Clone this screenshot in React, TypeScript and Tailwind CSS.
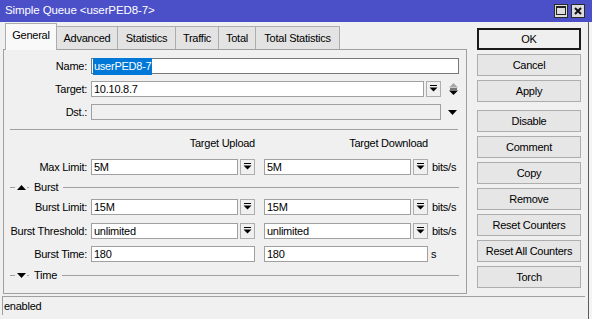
import React from "react";

const FONT = { fontFamily: '"Liberation Sans", Arial, sans-serif' };

const TABS = [
  { label: "General", w: "w-[52px]", active: true },
  { label: "Advanced", w: "w-[61px]" },
  { label: "Statistics", w: "w-[58px]" },
  { label: "Traffic", w: "w-[43px]" },
  { label: "Total", w: "w-[37px]" },
  { label: "Total Statistics", w: "w-[84px]" },
];

const BUTTONS = [
  "OK",
  "Cancel",
  "Apply",
  "Disable",
  "Comment",
  "Copy",
  "Remove",
  "Reset Counters",
  "Reset All Counters",
  "Torch",
];

function DropBtn() {
  return (
    <div className="w-[15px] h-[16px] ml-[2px] border border-[#adadad] bg-[#f0f0f0] flex items-center justify-center shrink-0">
      <svg width="9" height="8" viewBox="0 0 9 8">
        <rect x="1" y="0" width="7" height="1" fill="#000" />
        <polygon points="0.5,2.5 8.5,2.5 4.5,6.5" fill="#000" />
      </svg>
    </div>
  );
}

function Label({ text }: { text: string }) {
  return <div className="w-[87px] pr-[4px] text-right whitespace-nowrap shrink-0">{text}</div>;
}

function Input({ w, value, disabled }: { w: string; value?: string; disabled?: boolean }) {
  return (
    <div
      className={`${w} h-[16px] border border-[#a0a0a0] ${disabled ? "bg-[#f0f0f0]" : "bg-white"} pl-[2px] flex items-center whitespace-nowrap overflow-hidden shrink-0`}
    >
      {value}
    </div>
  );
}

function GroupLine({ label, open }: { label: string; open: boolean }) {
  return (
    <div className="flex items-center h-[12px]">
      <div className="ml-[6px] w-[5px] h-px bg-[#a0a0a0]" />
      <svg width="9" height="5" viewBox="0 0 9 5" className="ml-[2px]">
        {open ? (
          <polygon points="0,0 9,0 4.5,5" fill="#000" />
        ) : (
          <polygon points="0,5 9,5 4.5,0" fill="#000" />
        )}
      </svg>
      <div className="ml-[1px] w-[2px] h-px bg-[#a0a0a0]" />
      <span className="ml-[5px]">{label}</span>
      <div className="ml-[5px] flex-1 h-px bg-[#a0a0a0] mr-[7px]" />
    </div>
  );
}

export default function App() {
  return (
    <div
      className="w-[592px] h-[319px] bg-[#f0f0f0] text-[11px] tracking-[-0.25px] text-black flex flex-col overflow-hidden"
      style={FONT}
    >
      {/* title bar */}
      <div className="h-[22px] bg-[#4c50c8] flex items-center pl-[5px] pr-[7px] text-white text-[11.5px] tracking-[-0.1px]">
        <span className="flex-1">Simple Queue &lt;userPED8-7&gt;</span>
        <div className="w-[14px] h-[14px] bg-[#dcdcdc] border border-[#2a2a2a] flex items-center justify-center mb-[1px]">
          <div className="w-[10px] h-[9px] border border-[#222] border-t-2" />
        </div>
        <div className="w-[14px] h-[14px] ml-[3px] bg-[#dcdcdc] border border-[#2a2a2a] flex items-center justify-center mb-[1px]">
          <svg width="8" height="8" viewBox="0 0 8 8">
            <path d="M1 1 L7 7 M7 1 L1 7" stroke="#111" strokeWidth="2" />
          </svg>
        </div>
      </div>

      <div className="flex flex-1">
        <div className="w-[588px] flex flex-col">
          <div className="flex h-[274px]">
            {/* left: tabs + panel */}
            <div className="ml-[3px] w-[464px] flex flex-col pt-[1px]">
              <div className="flex items-end h-[26px] pl-[2px]">
                {TABS.map(t =>
                  t.active ? (
                    <div
                      key={t.label}
                      className={`${t.w} h-[27px] -mb-px relative z-10 bg-[#f9f9f9] border border-b-0 border-[#adadad] flex items-center justify-center pb-[3px]`}
                    >
                      {t.label}
                    </div>
                  ) : (
                    <div
                      key={t.label}
                      className={`${t.w} h-[23px] bg-[#e3e3e3] border border-l-0 border-b-0 border-[#adadad] flex items-center justify-center`}
                    >
                      {t.label}
                    </div>
                  ),
                )}
              </div>

              <div className="h-[245px] border border-[#a0a0a0] flex flex-col">
                <div className="flex items-center mt-[8px]">
                  <Label text="Name:" />
                  <div className="w-[368px] h-[16px] border border-[#7a7a7a] bg-white pl-px flex items-center">
                    <span className="bg-[#0078d7] text-white px-px">userPED8-7</span>
                  </div>
                </div>
                <div className="flex items-center mt-[6px]">
                  <Label text="Target:" />
                  <Input w="w-[333px]" value="10.10.8.7" />
                  <DropBtn />
                  <svg width="9" height="12" viewBox="0 0 9 12" className="ml-[8px]">
                    <polygon points="0,4.5 9,4.5 4.5,0" fill="#a8a8a8" />
                    <rect x="1" y="5.5" width="7" height="1" fill="#000" />
                    <polygon points="0,7.5 9,7.5 4.5,12" fill="#000" />
                  </svg>
                </div>
                <div className="flex items-center mt-[7px]">
                  <Label text="Dst.:" />
                  <Input w="w-[350px]" disabled />
                  <svg width="9" height="5" viewBox="0 0 9 5" className="ml-[7px]">
                    <polygon points="0,0 9,0 4.5,5" fill="#000" />
                  </svg>
                </div>

                <div className="mt-[8px] ml-[6px] w-[448px] h-px bg-[#a0a0a0]" />

                <div className="flex items-center h-[14px] mt-[7px] pl-[87px]">
                  <div className="w-[164px] text-right">Target Upload</div>
                  <div className="w-[164px] ml-[9px] text-right">Target Download</div>
                </div>

                <div className="flex items-center mt-[8px]">
                  <Label text="Max Limit:" />
                  <Input w="w-[147px]" value="5M" />
                  <DropBtn />
                  <div className="w-[9px]" />
                  <Input w="w-[147px]" value="5M" />
                  <DropBtn />
                  <span className="ml-[4px]">bits/s</span>
                </div>

                <div className="mt-[6px]">
                  <GroupLine label="Burst" open={false} />
                </div>

                <div className="flex items-center mt-[6px]">
                  <Label text="Burst Limit:" />
                  <Input w="w-[147px]" value="15M" />
                  <DropBtn />
                  <div className="w-[9px]" />
                  <Input w="w-[147px]" value="15M" />
                  <DropBtn />
                  <span className="ml-[4px]">bits/s</span>
                </div>
                <div className="flex items-center mt-[7px]">
                  <Label text="Burst Threshold:" />
                  <Input w="w-[147px]" value="unlimited" />
                  <DropBtn />
                  <div className="w-[9px]" />
                  <Input w="w-[147px]" value="unlimited" />
                  <DropBtn />
                  <span className="ml-[4px]">bits/s</span>
                </div>
                <div className="flex items-center mt-[7px]">
                  <Label text="Burst Time:" />
                  <Input w="w-[164px]" value="180" />
                  <div className="w-[9px]" />
                  <Input w="w-[164px]" value="180" />
                  <span className="ml-[3px]">s</span>
                </div>

                <div className="mt-[7px]">
                  <GroupLine label="Time" open={true} />
                </div>
              </div>
            </div>

            {/* right: buttons */}
            <div className="ml-[10px] w-[104px] pt-[6px] flex flex-col">
              {BUTTONS.map((b, i) => (
                <div
                  key={b}
                  className={`h-[22px] flex items-center justify-center bg-[#e6e6e6] ${
                    i === 0 ? "border-2 border-[#1a1a1a] bg-[#efefef]" : "border border-[#adadad]"
                  } ${i === 0 ? "" : i === 3 ? "mt-[8px]" : "mt-[4px]"}`}
                >
                  {b}
                </div>
              ))}
            </div>
          </div>

          {/* status bar */}
          <div className="ml-[2px] w-[583px] h-[19px] border-t border-l border-[#a0a0a0] flex items-center pl-[1px]">
            enabled
          </div>
        </div>
        <div className="w-px bg-[#5a5a5a]" />
        <div className="flex-1 bg-[#f4f4f4]" />
      </div>
    </div>
  );
}
